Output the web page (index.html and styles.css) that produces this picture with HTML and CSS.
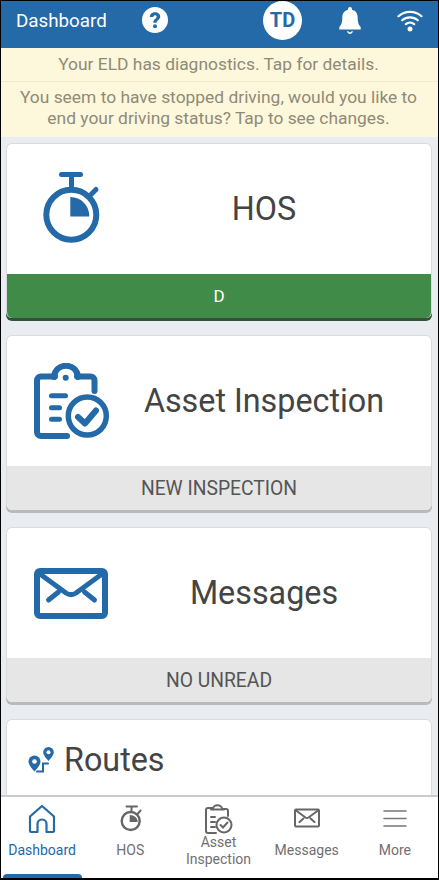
FILE: index.html
```html
<!DOCTYPE html>
<html lang="en">
<head>
    <meta charset="UTF-8">
    <meta name="viewport" content="width=device-width, initial-scale=1.0">
    <title>Dashboard</title>
    <link rel="stylesheet" href="styles.css">
</head>
<body>
    <div class="app">
        <!-- Top bar -->
        <header class="topbar">
            <span class="topbar-title">Dashboard</span>
            <svg class="help-icon" viewBox="0 0 26 26">
                <circle cx="13" cy="13" r="13" fill="#fff"/>
                <path d="M7.800 10c0-3 2.300-4.800 5.300-4.800 2.900 0 5.100 1.700 5.100 4.300 0 3.500-3.600 3.600-3.600 6.200h-3.300c0-3.800 3.300-4.100 3.300-6 0-.8-.6-1.400-1.500-1.400-1 0-1.700.7-1.700 1.800z" fill="#2469a8"/>
                <circle cx="13" cy="19.300" r="2" fill="#2469a8"/>
            </svg>
            <span class="avatar">TD</span>
            <svg class="bell-icon" viewBox="0 0 22 27">
                <path d="M11 0c1.200 0 2 .8 2 2v.8c3.700.9 5.700 3.900 5.700 7.700 0 5 .8 7.300 3 9.500v2.500H.3V20c2.200-2.200 3-4.500 3-9.500 0-3.800 2-6.800 5.700-7.700V2c0-1.200.8-2 2-2z" fill="#fff"/>
                <path d="M8 24.300h1.500c.2.700.8 1.100 1.500 1.100s1.300-.4 1.500-1.100H14c-.3 1.500-1.500 2.600-3 2.600s-2.700-1.100-3-2.600z" fill="#fff"/>
            </svg>
            <svg class="wifi-icon" viewBox="0 0 26 25" fill="none" stroke="#fff" stroke-width="2.200" stroke-linecap="round">
                <path d="M1.500 8.200C7.800 2.300 18.200 2.300 24.500 8.200"/>
                <path d="M5.200 12.300c4.300-4 11.300-4 15.600 0"/>
                <path d="M8.800 16.200c2.400-2.100 6-2.100 8.400 0"/>
                <circle cx="13" cy="21" r="2.500" fill="#fff" stroke="none"/>
            </svg>
        </header>

        <!-- Notices -->
        <div class="notice notice-short">Your ELD has diagnostics. Tap for details.</div>
        <div class="notice notice-long">You seem to have stopped driving, would you like to end your driving status? Tap to see changes.</div>

        <main class="cards">
            <section class="card">
                <div class="card-body">
                    <svg class="card-icon" viewBox="0 0 76 76">
                        <rect x="25" y="1" width="24" height="5" rx="2.500" fill="#2469a8"/>
                        <rect x="35" y="4" width="5" height="14" fill="#2469a8"/>
                        <path d="M57 23.500l5-5" stroke="#2469a8" stroke-width="5" stroke-linecap="round"/>
                        <circle cx="37.300" cy="43.800" r="25" fill="none" stroke="#2469a8" stroke-width="6"/>
                        <path d="M36.300 26c11 0 19 8.500 19 19.500h-19z" fill="#2469a8"/>
                    </svg>
                    <h2 class="card-title">HOS</h2>
                </div>
                <div class="card-bar bar-green">D</div>
            </section>

            <section class="card">
                <div class="card-body">
                    <svg class="card-icon" viewBox="0 0 76 76">
                        <path d="M33 73H7a4 4 0 0 1-4-4V17.500a4 4 0 0 1 4-4h14M43 13.500h13.500a4 4 0 0 1 4 4V28" fill="none" stroke="#2469a8" stroke-width="6" stroke-linecap="round"/>
                        <path d="M20 14c1-15 23-15 24 0" fill="none" stroke="#2469a8" stroke-width="6" stroke-linecap="round"/>
                        <circle cx="31.700" cy="14.700" r="3" fill="#2469a8"/>
                        <path d="M17.500 32.700h14M17.500 44.700h8M17.500 56.300h8" stroke="#2469a8" stroke-width="5" stroke-linecap="round"/>
                        <circle cx="53.300" cy="53" r="19" fill="#fff" stroke="#2469a8" stroke-width="5.500"/>
                        <path d="M44 54l7 6.500 11-13" fill="none" stroke="#2469a8" stroke-width="6" stroke-linecap="round" stroke-linejoin="round"/>
                    </svg>
                    <h2 class="card-title">Asset Inspection</h2>
                </div>
                <div class="card-bar">NEW INSPECTION</div>
            </section>

            <section class="card">
                <div class="card-body">
                    <svg class="card-icon" viewBox="0 0 76 76">
                        <rect x="3" y="16" width="68" height="45" rx="3" fill="none" stroke="#2469a8" stroke-width="6"/>
                        <path d="M6 19l26 19c3 2 7 2 10 0l26-19" fill="none" stroke="#2469a8" stroke-width="5" stroke-linecap="round"/>
                        <path d="M14.500 45l10-8M60.500 45l-10-8" stroke="#2469a8" stroke-width="5" stroke-linecap="round"/>
                    </svg>
                    <h2 class="card-title">Messages</h2>
                </div>
                <div class="card-bar">NO UNREAD</div>
            </section>

            <section class="card card-routes">
                <svg class="routes-icon" viewBox="0 0 28 28">
                    <path d="M7.500 9.500a6 6 0 0 0-6 6c0 4 6 10 6 10s6-6 6-10a6 6 0 0 0-6-6z" fill="#2469a8"/>
                    <circle cx="7.500" cy="15.500" r="2.300" fill="#fff"/>
                    <path d="M21.500 1a5.300 5.300 0 0 0-5.300 5.300c0 3.500 5.300 8.700 5.300 8.700s5.300-5.200 5.300-8.700A5.300 5.300 0 0 0 21.500 1z" fill="#2469a8"/>
                    <circle cx="21.500" cy="6.300" r="2" fill="#fff"/>
                    <path d="M21 17.500h-5v8h-6" fill="none" stroke="#2469a8" stroke-width="2" stroke-linecap="round"/>
                </svg>
                <h2 class="routes-title">Routes</h2>
            </section>
        </main>

        <!-- Bottom tabs -->
        <nav class="tabs">
            <div class="tab tab-active">
                <svg class="tab-icon" viewBox="0 0 30 30" fill="none" stroke="#2469a8" stroke-width="2.200" stroke-linejoin="round">
                    <path d="M3 27V12.500L15 2l12 10.500V27a1 1 0 0 1-1 1h-6.500v-8a4.500 4.500 0 0 0-9 0v8H4a1 1 0 0 1-1-1z"/>
                </svg>
                <span>Dashboard</span>
            </div>
            <div class="tab">
                <svg class="tab-icon" viewBox="0 0 30 30">
                    <path d="M11.500 2.500H22M16.500 2.500V7M23 9.500l2.500-3" stroke="#666" stroke-width="2" stroke-linecap="round"/>
                    <circle cx="15.700" cy="17" r="9" fill="none" stroke="#666" stroke-width="2.400"/>
                    <path d="M14.700 11c4.500 0 8 3 8 7h-8z" fill="#666"/>
                </svg>
                <span>HOS</span>
            </div>
            <div class="tab">
                <svg class="tab-icon" viewBox="0 0 30 30" fill="none" stroke="#666" stroke-width="2" stroke-linecap="round">
                    <path d="M9 4H4a2 2 0 0 0-2 2v21a2 2 0 0 0 2 2h8"/>
                    <path d="M9 5c0-5 9-5 9 0h4a2 2 0 0 1 2 2v5"/>
                    <path d="M7 5.500h13M7 13h4M7 18h4M7 23h4"/>
                    <circle cx="20" cy="21" r="7.500"/>
                    <path d="M16.500 21l2.500 2.500 4.500-5"/>
                </svg>
                <span class="tab-wrap">Asset Inspection</span>
            </div>
            <div class="tab">
                <svg class="tab-icon" viewBox="0 0 30 30" fill="none" stroke="#666" stroke-width="2" stroke-linecap="round">
                    <rect x="3" y="5.500" width="24" height="17" rx="1"/>
                    <path d="M4 6.500l9.500 7c1 .6 2 .6 3 0l9.500-7M7.500 18l4-3.500M22.500 18l-4-3.500"/>
                </svg>
                <span>Messages</span>
            </div>
            <div class="tab">
                <svg class="tab-icon" viewBox="0 0 30 30" stroke="#777" stroke-width="1.600" stroke-linecap="round">
                    <path d="M4 7h22M4 14.500h22M4 22h22"/>
                </svg>
                <span>More</span>
            </div>
            <div class="tab-marker"></div>
        </nav>
    </div>
</body>
</html>
```

FILE: styles.css
```css
* { box-sizing: border-box; }
html, body { margin: 0; padding: 0; height: 100%; }
body {
    font-family: Roboto, "Liberation Sans", sans-serif;
    background: #000;
    overflow: hidden;
}
.app {
    width: 437px;
    height: 877px;
    margin: 1px 0 0 1px;
    background: #e9ecf0;
    display: flex;
    flex-direction: column;
    overflow: hidden;
    position: relative;
}
.topbar {
    height: 47px;
    flex: none;
    background: #2469a8;
    color: #fff;
    display: flex;
    align-items: center;
    padding-left: 15px;
}
.topbar-title { font-size: 18.800px; width: 126px; margin-top: -7px; }
.help-icon { width: 26px; height: 26px; margin-top: -9px; }
.avatar {
    width: 39px;
    height: 39px;
    border-radius: 50%;
    background: #fff;
    color: #2469a8;
    font-size: 20px;
    font-weight: 700;
    display: flex;
    align-items: center;
    justify-content: center;
    margin: -9px 0 0 95px;
}
.bell-icon { width: 22px; height: 27px; margin: -8px 0 0 37px; }
.wifi-icon { width: 26px; height: 25px; margin: -8px 0 0 36px; }

.notice {
    background: #fdf8dc;
    color: #8f8a78;
    text-align: center;
    font-size: 17.400px;
    line-height: 21px;
    flex: none;
}
.notice-short { height: 34px; padding: 6px 2px 0 0; border-bottom: 1px solid #eee9cf; }
.notice-long { height: 55px; padding: 5px 12px 0 10px; }

.cards {
    flex: 1;
    min-height: 0;
    padding: 6px 6px 0 5px;
    display: flex;
    flex-direction: column;
    gap: 17px;
    overflow: hidden;
}
.card {
    flex: none;
    background: #fff;
    border-radius: 6px;
    border: 1px solid #d9dbdf;
    border-bottom: none;
    overflow: hidden;
    box-shadow: 0 3px 0 #b9babc;
}
.card:first-child { box-shadow: 0 3px 0 #35503a; }
.card-body {
    height: 130px;
    display: flex;
    align-items: center;
    padding-left: 27px;
}
.card-icon { width: 76px; height: 76px; flex: none; }
.card-title {
    flex: 1;
    margin: -1px 0 0;
    padding-right: 13px;
    text-align: center;
    font-size: 32.300px;
    font-weight: 400;
    color: #444;
}
.card-bar {
    height: 44px;
    background: #e6e6e6;
    color: #555;
    display: flex;
    align-items: center;
    justify-content: center;
    font-size: 19.300px;
}
.bar-green { background: #418b49; color: #fff; font-size: 17px; }

.card-routes {
    height: 90px;
    display: flex;
    align-items: flex-start;
    padding: 22px 0 0 20px;
    gap: 9px;
}
.routes-icon { width: 28px; height: 28px; margin-top: 4px; }
.routes-title { margin: 0; font-size: 32.300px; font-weight: 400; color: #444; line-height: 36px; }

.tabs {
    position: absolute;
    left: -3px;
    right: -1px;
    bottom: 0;
    height: 83px;
    background: #fff;
    border-top: 2px solid #c9cbcd;
    display: flex;
}
.tab {
    flex: 1;
    min-width: 0;
    display: flex;
    flex-direction: column;
    align-items: center;
    padding-top: 7px;
    color: #707070;
    font-size: 14px;
    line-height: 17px;
    text-align: center;
}
.tab-active { color: #2469a8; }
.tab-icon { width: 30px; height: 30px; flex: none; margin-bottom: 8px; }
.tab-wrap { width: 70px; margin-top: -8px; }
.tab-marker {
    position: absolute;
    left: 5px;
    bottom: 0;
    width: 79px;
    height: 4px;
    background: #2469a8;
    border-radius: 4px 4px 0 0;
}
```
